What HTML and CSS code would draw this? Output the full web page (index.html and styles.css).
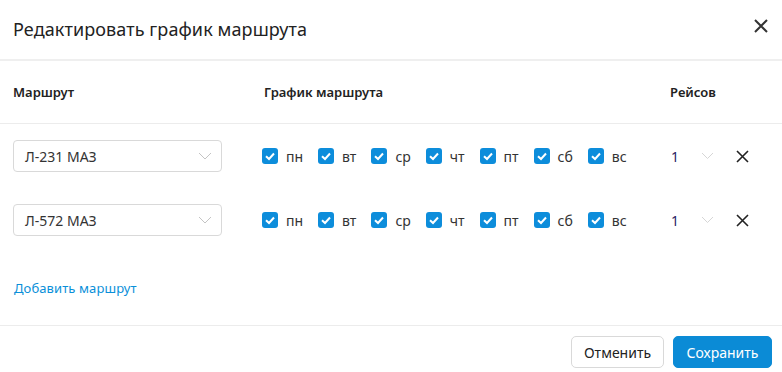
FILE: index.html
```html
<!DOCTYPE html>
<html lang="ru">
<head>
<meta charset="utf-8">
<link rel="stylesheet" href="styles.css">
</head>
<body>
<div class="dialog">
  <div class="dlg-head">
    <h1 class="dlg-title">Редактировать график маршрута</h1>
    <button class="close-btn" aria-label="Закрыть">
      <svg width="16" height="16" viewBox="0 0 16 16"><path d="M2 2 L14 14 M14 2 L2 14" stroke="#333" stroke-width="2" fill="none"/></svg>
    </button>
  </div>

  <div class="grid grid-head">
    <div class="th">Маршрут</div>
    <div class="th th-sched">График маршрута</div>
    <div class="th">Рейсов</div>
  </div>

  <div class="grid row">
    <div class="select"><span>Л-231 МАЗ</span>
      <svg class="chev" width="14" height="8" viewBox="0 0 14 8"><path d="M1 1 L7 7 L13 1" stroke="#c4c4c4" stroke-width="1" fill="none"/></svg>
    </div>
    <div class="days">
      <label class="day"><span class="cb"><svg width="16" height="16" viewBox="0 0 16 16"><path d="M4 8.2 L7 11 L12 5.5" stroke="#fff" stroke-width="2" fill="none"/></svg></span>пн</label>
      <label class="day"><span class="cb"><svg width="16" height="16" viewBox="0 0 16 16"><path d="M4 8.2 L7 11 L12 5.5" stroke="#fff" stroke-width="2" fill="none"/></svg></span>вт</label>
      <label class="day"><span class="cb"><svg width="16" height="16" viewBox="0 0 16 16"><path d="M4 8.2 L7 11 L12 5.5" stroke="#fff" stroke-width="2" fill="none"/></svg></span>ср</label>
      <label class="day"><span class="cb"><svg width="16" height="16" viewBox="0 0 16 16"><path d="M4 8.2 L7 11 L12 5.5" stroke="#fff" stroke-width="2" fill="none"/></svg></span>чт</label>
      <label class="day"><span class="cb"><svg width="16" height="16" viewBox="0 0 16 16"><path d="M4 8.2 L7 11 L12 5.5" stroke="#fff" stroke-width="2" fill="none"/></svg></span>пт</label>
      <label class="day"><span class="cb"><svg width="16" height="16" viewBox="0 0 16 16"><path d="M4 8.2 L7 11 L12 5.5" stroke="#fff" stroke-width="2" fill="none"/></svg></span>сб</label>
      <label class="day"><span class="cb"><svg width="16" height="16" viewBox="0 0 16 16"><path d="M4 8.2 L7 11 L12 5.5" stroke="#fff" stroke-width="2" fill="none"/></svg></span>вс</label>
    </div>
    <div class="trips">
      <span class="num">1</span>
      <svg class="chev2" width="13" height="8" viewBox="0 0 13 8"><path d="M1 1 L6.5 6.5 L12 1" stroke="#d6d6d6" stroke-width="1" fill="none"/></svg>
      <svg class="del" width="13" height="13" viewBox="0 0 13 13"><path d="M1 1 L12 12 M12 1 L1 12" stroke="#222" stroke-width="1.6" fill="none"/></svg>
    </div>
  </div>

  <div class="grid row">
    <div class="select"><span>Л-572 МАЗ</span>
      <svg class="chev" width="14" height="8" viewBox="0 0 14 8"><path d="M1 1 L7 7 L13 1" stroke="#c4c4c4" stroke-width="1" fill="none"/></svg>
    </div>
    <div class="days">
      <label class="day"><span class="cb"><svg width="16" height="16" viewBox="0 0 16 16"><path d="M4 8.2 L7 11 L12 5.5" stroke="#fff" stroke-width="2" fill="none"/></svg></span>пн</label>
      <label class="day"><span class="cb"><svg width="16" height="16" viewBox="0 0 16 16"><path d="M4 8.2 L7 11 L12 5.5" stroke="#fff" stroke-width="2" fill="none"/></svg></span>вт</label>
      <label class="day"><span class="cb"><svg width="16" height="16" viewBox="0 0 16 16"><path d="M4 8.2 L7 11 L12 5.5" stroke="#fff" stroke-width="2" fill="none"/></svg></span>ср</label>
      <label class="day"><span class="cb"><svg width="16" height="16" viewBox="0 0 16 16"><path d="M4 8.2 L7 11 L12 5.5" stroke="#fff" stroke-width="2" fill="none"/></svg></span>чт</label>
      <label class="day"><span class="cb"><svg width="16" height="16" viewBox="0 0 16 16"><path d="M4 8.2 L7 11 L12 5.5" stroke="#fff" stroke-width="2" fill="none"/></svg></span>пт</label>
      <label class="day"><span class="cb"><svg width="16" height="16" viewBox="0 0 16 16"><path d="M4 8.2 L7 11 L12 5.5" stroke="#fff" stroke-width="2" fill="none"/></svg></span>сб</label>
      <label class="day"><span class="cb"><svg width="16" height="16" viewBox="0 0 16 16"><path d="M4 8.2 L7 11 L12 5.5" stroke="#fff" stroke-width="2" fill="none"/></svg></span>вс</label>
    </div>
    <div class="trips">
      <span class="num">1</span>
      <svg class="chev2" width="13" height="8" viewBox="0 0 13 8"><path d="M1 1 L6.5 6.5 L12 1" stroke="#d6d6d6" stroke-width="1" fill="none"/></svg>
      <svg class="del" width="13" height="13" viewBox="0 0 13 13"><path d="M1 1 L12 12 M12 1 L1 12" stroke="#222" stroke-width="1.6" fill="none"/></svg>
    </div>
  </div>

  <div class="add-wrap"><a class="add-link" href="#">Добавить маршрут</a></div>

  <div class="dlg-foot">
    <button class="btn btn-cancel">Отменить</button>
    <button class="btn btn-save">Сохранить</button>
  </div>
</div>
</body>
</html>
```

FILE: styles.css
```css
* { box-sizing: border-box; }
html, body { margin: 0; padding: 0; background: #fff; }
body {
  font-family: "Noto Sans", "Open Sans", sans-serif;
  color: #333;
  width: 782px;
  height: 372px;
  overflow: hidden;
}
.dialog { width: 782px; }

.dlg-head {
  height: 61px;
  display: flex;
  align-items: center;
  justify-content: space-between;
  padding: 0 13px 2px 13px;
  border-bottom: 2px solid #efefef;
}
.dlg-title {
  margin: 0;
  font-size: 18px;
  font-weight: 400;
  color: #222;
  letter-spacing: 0.1px;
}
.close-btn {
  border: 0;
  background: none;
  padding: 0;
  width: 16px;
  height: 16px;
  margin-right: 0;
  margin-bottom: 5px;
  display: flex;
}

.grid {
  display: grid;
  grid-template-columns: 249px 408px 1fr;
  padding-left: 13px;
  align-items: center;
}
.grid-head {
  height: 63px;
  border-bottom: 1px solid #ececec;
}
.th {
  font-size: 13px;
  font-weight: 600;
  color: #222;
}
.th-sched { padding-left: 2px; }

.row { height: 64px; }

.select {
  width: 209px;
  height: 32px;
  border: 1px solid #d9d9d9;
  border-radius: 4px;
  display: flex;
  align-items: center;
  justify-content: space-between;
  padding: 0 9px 0 11px;
  font-size: 14px;
  color: #333;
}
.chev { display: block; }

.days { display: flex; align-items: center; }
.day {
  display: flex;
  align-items: center;
  gap: 8px;
  margin-right: 15px;
  font-size: 14px;
  color: #333;
}
.cb {
  width: 16px;
  height: 16px;
  border-radius: 3px;
  background: #0d8ddb;
  display: block;
}
.cb svg { display: block; }

.trips {
  display: flex;
  align-items: center;
  padding-left: 1px;
}
.num {
  font-size: 14px;
  color: #2b2163;
  width: 30px;
}
.chev2 { display: block; margin-right: 22px; }
.del { display: block; }

.add-wrap {
  padding: 25px 14px 27px;
  line-height: 20px;
}
.add-link {
  font-size: 13px;
  color: #0a8fd9;
  text-decoration: none;
  letter-spacing: 0.1px;
}

.dlg-foot {
  border-top: 1px solid #ececec;
  display: flex;
  justify-content: flex-end;
  gap: 9px;
  padding: 10px 10px 0 0;
}
.btn {
  height: 32px;
  border-radius: 5px;
  font-family: inherit;
  font-size: 14px;
  padding: 0;
}
.btn-cancel {
  width: 93px;
  border: 1px solid #d9d9d9;
  background: #fff;
  color: #222;
}
.btn-save {
  width: 99px;
  border: 1px solid #0b8bd6;
  background: #0b8bd6;
  color: #fff;
}
```
